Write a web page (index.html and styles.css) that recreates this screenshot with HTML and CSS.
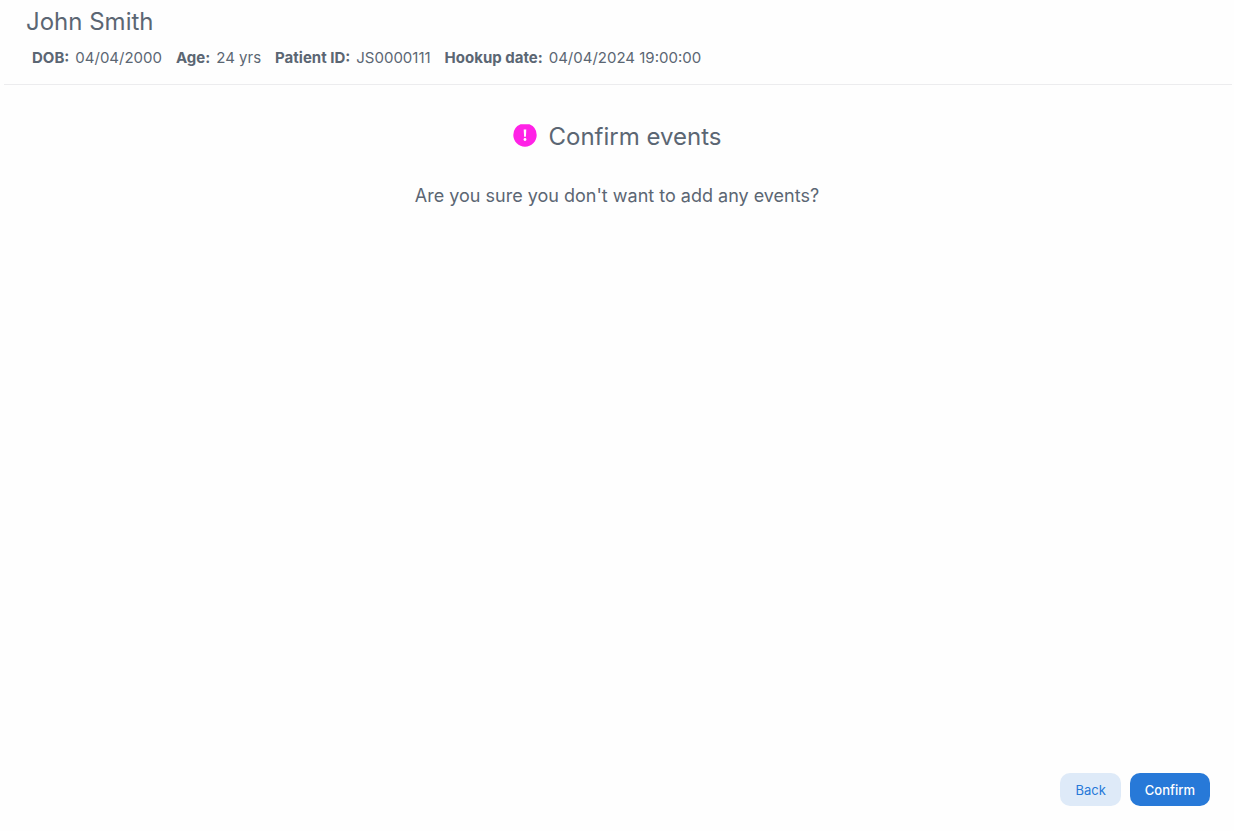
FILE: index.html
```
<!DOCTYPE html>
<html lang="en">
    <head>
        <meta charset="utf-8">
        <title>Confirm events</title>
        <link rel="stylesheet" href="styles.css">
    </head>
    <body>
        <header class="patient">
            <h1 class="patient-name">John Smith</h1>
            <dl class="patient-info">
                <div class="info-item"><dt>DOB:</dt><dd>04/04/2000</dd></div>
                <div class="info-item"><dt>Age:</dt><dd>24 yrs</dd></div>
                <div class="info-item"><dt>Patient ID:</dt><dd>JS0000111</dd></div>
                <div class="info-item"><dt>Hookup date:</dt><dd>04/04/2024 19:00:00</dd></div>
            </dl>
        </header>

        <main class="content">
            <h2 class="title">
                <svg class="title-icon" viewBox="0 0 24 24" aria-hidden="true">
                    <path d="M7.5 1.2H16.5A12 11.7 0 0 1 23.7 12A11.7 11.7 0 0 1 0.3 12A12 11.7 0 0 1 7.5 1.2Z" fill="#ff22e6"/>
                    <path d="M10.7 6.5h2.6l-.4 7.2h-1.8z" fill="#fff"/>
                    <circle cx="12" cy="16.5" r="1.4" fill="#fff"/>
                </svg>
                Confirm events
            </h2>
            <p class="message">Are you sure you don't want to add any events?</p>
        </main>

        <footer class="actions">
            <button class="button button-back" type="button">Back</button>
            <button class="button button-confirm" type="button">Confirm</button>
        </footer>
    </body>
</html>
```
FILE: styles.css
```
* {
    box-sizing: border-box;
}

body {
    display: flex;
    flex-direction: column;
    min-height: 100vh;
    margin: 0;
    background: #fefefe;
    color: #5b6673;
    font-family: Inter, "Liberation Sans", sans-serif;
}

.patient {
    margin: 0 2px 0 4px;
    padding: 8px 22px 16px;
    border-bottom: 1px solid #ececee;
}

.patient-name {
    margin: 0;
    font-size: 24px;
    line-height: 28px;
    font-weight: 400;
}

.patient-info {
    display: flex;
    flex-wrap: wrap;
    gap: 14px;
    margin: 12px 0 0;
    padding: 0 6px;
    font-size: 15px;
    line-height: 20px;
}

.info-item {
    display: flex;
    gap: 6px;
}

.info-item dt {
    font-weight: 700;
}

.info-item dd {
    margin: 0;
}

.content {
    flex: 1;
    padding: 36px 24px;
    text-align: center;
}

.title {
    display: flex;
    justify-content: center;
    align-items: center;
    gap: 12px;
    margin: 0;
    font-size: 24px;
    line-height: 32px;
    font-weight: 400;
}

.title-icon {
    width: 24px;
    height: 24px;
    margin-bottom: 4px;
}

.message {
    margin: 31px 0 0;
    font-size: 18px;
    line-height: 24px;
}

.actions {
    display: flex;
    justify-content: flex-end;
    gap: 9px;
    padding: 0 24px 25px;
}

.button {
    height: 33px;
    padding: 0 15px;
    border: 0;
    border-radius: 10px;
    font-family: inherit;
    font-size: 13px;
    font-weight: 500;
}

.button-back {
    background: #deeaf8;
    color: #2779d8;
    font-weight: 400;
}

.button-confirm {
    background: #2779d8;
    color: #fff;
}
```
